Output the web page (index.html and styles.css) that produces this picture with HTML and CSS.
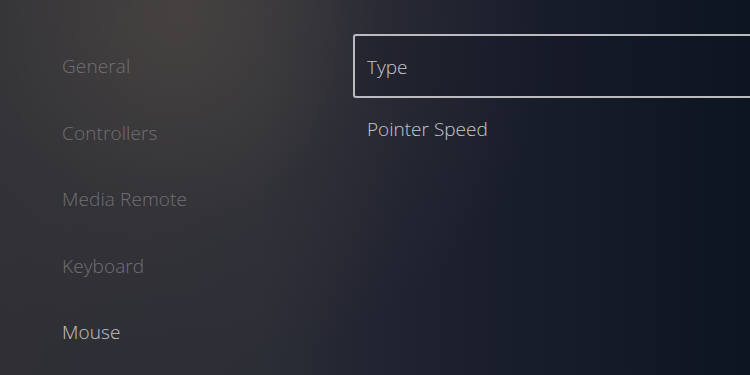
FILE: index.html
```html
<!DOCTYPE html>
<html lang="en">
<head>
<meta charset="utf-8">
<title>Mouse Settings</title>
<link rel="stylesheet" href="styles.css">
</head>
<body>
<div class="screen">
  <nav class="menu">
    <div class="menu-item">General</div>
    <div class="menu-item">Controllers</div>
    <div class="menu-item">Media Remote</div>
    <div class="menu-item">Keyboard</div>
    <div class="menu-item active">Mouse</div>
  </nav>
  <main class="panel">
    <div class="option selected">Type</div>
    <div class="option">Pointer Speed</div>
  </main>
</div>
</body>
</html>
```
FILE: styles.css
```css
html, body {
  margin: 0;
  padding: 0;
  width: 750px;
  height: 375px;
  overflow: hidden;
}

.screen {
  width: 750px;
  height: 375px;
  display: flex;
  font-family: "Open Sans", "Noto Sans", sans-serif;
  font-weight: 300;
  background:
    radial-gradient(ellipse 200px 220px at 180px 0px, rgba(90, 82, 74, 0.4), rgba(90, 82, 74, 0) 100%),
    radial-gradient(ellipse 380px 330px at 170px 40px, rgba(66, 63, 62, 0.55), rgba(66, 63, 62, 0) 100%),
    linear-gradient(90deg, #2f2f35 0px, #2c2e36 260px, #1f2230 400px, #161b28 580px, #0d1422 750px);
}

.menu {
  width: 291px;
  padding-left: 62px;
  padding-top: 56px;
  display: flex;
  flex-direction: column;
}

.menu-item {
  flex: 0 0 66.6px;
  font-size: 19px;
  line-height: 20px;
  color: #707074;
  letter-spacing: 0.1px;
}

.menu-item.active {
  color: #c4c4c8;
}

.panel {
  flex: 1;
  padding-top: 34px;
  display: flex;
  flex-direction: column;
}

.option {
  font-size: 19px;
  color: #c8c8cc;
  padding-left: 14px;
  height: 63px;
  line-height: 63px;
}

.option.selected {
  height: 60px;
  line-height: 62px;
  padding-left: 12px;
  border: 2px solid #b9bbc0;
  border-right: none;
  border-radius: 3px 0 0 3px;
  background: rgba(20, 24, 36, 0.3);
}
```
